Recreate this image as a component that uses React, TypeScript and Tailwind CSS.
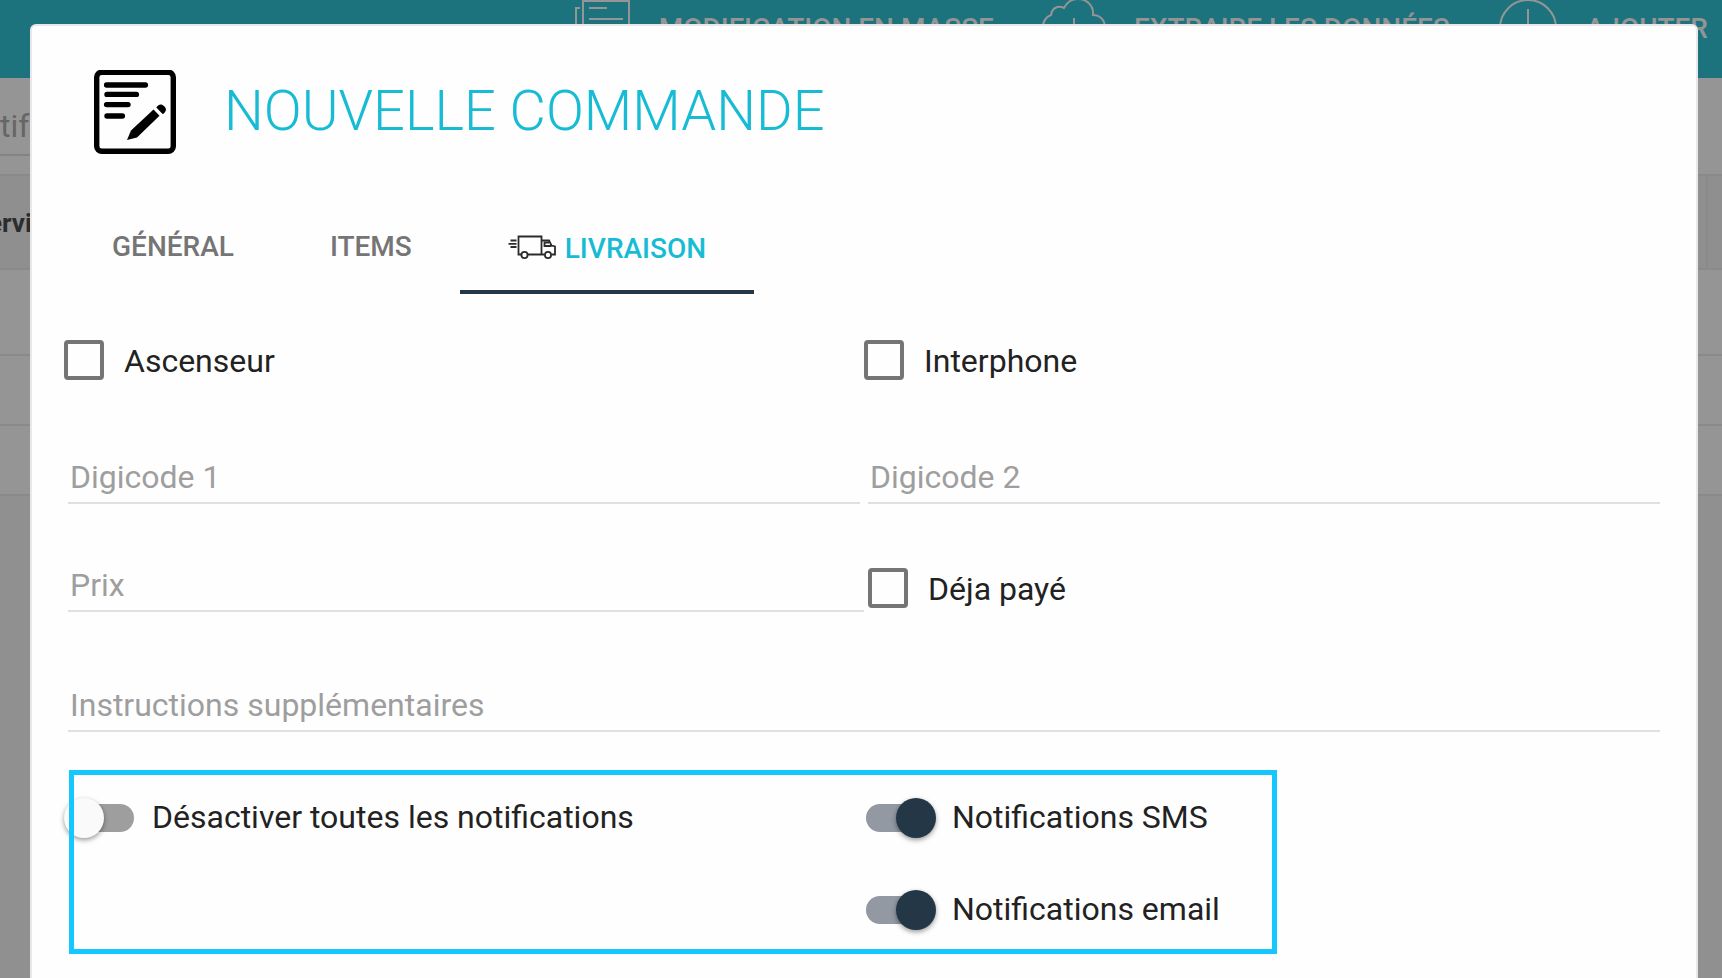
import { useState, type ReactNode } from "react";

function CopyIcon() {
  return (
    <svg className="h-16 w-14 shrink-0" viewBox="0 0 56 64" fill="none" stroke="currentColor" strokeWidth="2">
      <path d="M8 1H54V54H8Z" />
      <path d="M5 8H1V62H46V57" />
      <path d="M14 8H32M14 19H48M14 30H48M14 41H48" />
    </svg>
  );
}

function CloudIcon() {
  return (
    <svg className="h-16 w-16 shrink-0" viewBox="0 0 64 64" fill="none" stroke="currentColor" strokeWidth="2">
      <path d="M14 44C5 42 1 35 1 27C1 21 4 17 9 15C10 8 16 5 22 8C25 2 30-1 36-1C45-1 52 6 51 15C58 15 63 20 63 28C63 36 58 43 50 44" />
      <path d="M32 18V56M24 48L32 56L40 48" />
    </svg>
  );
}

function AddIcon() {
  return (
    <svg className="h-16 w-[60px] shrink-0" viewBox="0 0 60 64" fill="none" stroke="currentColor" strokeWidth="2">
      <circle cx="30" cy="28" r="28" />
      <path d="M30 9V47M11 28H49" />
    </svg>
  );
}

function OrderIcon() {
  return (
    <svg className="h-[84px] w-[82px] shrink-0" viewBox="0 1 82 84">
      <rect x="2.7" y="3.2" width="76.6" height="79.1" rx="5" fill="none" stroke="#000" strokeWidth="5.4" />
      <path d="M12.6 16H51.4M13 25.4H42.4M12.6 35.6H34M13 47H28.4" stroke="#000" strokeWidth="5.4" strokeLinecap="round" />
      <path d="M33 71L37 61.5L59.5 40.5L65.5 46.8L43 68.4Z" />
      <path d="M62.3 38.6C64.5 35 67.5 34.4 70 37C72.6 39.6 72.6 41.5 70 44.4L68.6 45Z" />
    </svg>
  );
}

function TruckIcon() {
  return (
    <svg className="mb-1 h-6 w-12 shrink-0" viewBox="0 0 48 24" fill="none" stroke="#2b2b2b" strokeWidth="1.8">
      <path d="M13 19.5H10.5V1.5H33.5V19.5H20M33.5 19.5H36M44 19.5H47V11.5L43.5 10.5L41 5.5H33.5" />
      <path d="M43.5 11H36.5V7.5H41" />
      <circle cx="16.5" cy="20" r="3.1" />
      <circle cx="40" cy="20" r="3.1" />
      <path d="M2.5 5.5H8.5M0.5 8.8H8.5M2.5 12H8.5" />
    </svg>
  );
}

function HeaderAction({ icon, label }: { icon: ReactNode; label: string }) {
  return (
    <button type="button" className="flex items-start gap-7 text-[28px] leading-[34px] font-medium whitespace-nowrap">
      {icon}
      <span className="pt-3">{label}</span>
    </button>
  );
}

function Backdrop() {
  return (
    <div className="absolute inset-0 bg-[#909090]" aria-hidden="true" inert>
      <header className="flex h-[78px] justify-end gap-12 overflow-hidden bg-[#1c737e] pr-3.5 text-[#959595]">
        <HeaderAction icon={<CopyIcon />} label="MODIFICATION EN MASSE" />
        <HeaderAction icon={<CloudIcon />} label="EXTRAIRE LES DONNÉES" />
        <HeaderAction icon={<AddIcon />} label="AJOUTER" />
      </header>
      <div className="h-24 bg-[#959595]">
        <div className="flex h-[78px] w-[300px] items-center border-b-2 border-[#848484] pt-5 text-[32px] text-[#666]">tif</div>
      </div>
      <div className="flex h-24 items-center justify-between border-y-2 border-[#8a8a8a] bg-[#8f8f8f] text-[26px] font-bold text-[#2c2c2c]">
        <span className="-ml-3 pt-0.5">ervice</span>
        <span className="w-4 self-stretch border-l-2 border-[#8a8a8a]" />
      </div>
      <div className="h-[86px] border-b-2 border-[#8a8a8a] bg-[#959595]" />
      <div className="h-[70px] border-b-2 border-[#8a8a8a] bg-[#959595]" />
      <div className="h-[70px] border-b-2 border-[#8a8a8a] bg-[#959595]" />
    </div>
  );
}

function Tab({ active, onClick, children }: { active: boolean; onClick: () => void; children: ReactNode }) {
  return (
    <button
      type="button"
      role="tab"
      aria-selected={active}
      onClick={onClick}
      className={
        active
          ? "flex items-center gap-[9px] border-b-4 border-[#243746] px-12 pt-1 text-[#17bcd4]"
          : "flex items-center gap-[9px] border-b-4 border-transparent px-12 text-[#757575]"
      }
    >
      {children}
    </button>
  );
}

function Checkbox({ label }: { label: string }) {
  return (
    <label className="flex items-center gap-5">
      <input type="checkbox" className="size-10 appearance-none rounded-sm border-4 border-[#757575] checked:bg-[#243746]" />
      <span className="-mb-0.5">{label}</span>
    </label>
  );
}

function TextField({ label }: { label: string }) {
  return (
    <input
      type="text"
      aria-label={label}
      placeholder={label}
      className="block h-[60px] w-full border-b-2 border-[#e0e0e0] bg-transparent px-0.5 pt-2 outline-none placeholder:text-[#9e9e9e] placeholder:opacity-100"
    />
  );
}

function Toggle({ label, defaultChecked = false }: { label: string; defaultChecked?: boolean }) {
  return (
    <label className="flex h-10 items-center gap-4">
      <span className="grid h-10 w-[72px] items-center">
        <input
          type="checkbox"
          role="switch"
          defaultChecked={defaultChecked}
          className="peer col-start-1 row-start-1 mx-0.5 h-7 appearance-none rounded-full bg-[#9e9e9e] checked:bg-[#9299a2]"
        />
        <span className="col-start-1 row-start-1 size-10 rounded-full bg-[#fafafa] shadow-[0_2px_5px_rgba(0,0,0,0.4)] peer-checked:justify-self-end peer-checked:bg-[#243746]" />
      </span>
      <span className="pb-0.5">{label}</span>
    </label>
  );
}

export default function App() {
  const [tab, setTab] = useState("livraison");
  return (
    <div className="relative h-screen overflow-hidden font-[Roboto,sans-serif]">
      <Backdrop />
      <div className="relative h-full pt-6 pr-6 pl-[30px]">
        <main
          role="dialog"
          aria-labelledby="title"
          className="min-h-full rounded-t-md border-2 border-b-0 border-[#e8e8e8] bg-[#fefefe] px-8 text-[32px] leading-10 text-[#222]"
        >
          <div className="flex items-start gap-12 px-[30px] pt-11">
            <OrderIcon />
            <h1 id="title" className="text-[56px] leading-[82px] font-light text-[#17bcd4]">NOUVELLE COMMANDE</h1>
          </div>
          <div role="tablist" className="mt-[49px] flex h-[91px] text-[28px] font-medium">
            <Tab active={tab === "general"} onClick={() => setTab("general")}>GÉNÉRAL</Tab>
            <Tab active={tab === "items"} onClick={() => setTab("items")}>ITEMS</Tab>
            <Tab active={tab === "livraison"} onClick={() => setTab("livraison")}>
              <TruckIcon />
              LIVRAISON
            </Tab>
          </div>
          <form>
            <div className="mt-[46px] grid grid-cols-2">
              <Checkbox label="Ascenseur" />
              <Checkbox label="Interphone" />
            </div>
            <div className="mt-16 grid grid-cols-2 gap-2 px-1">
              <TextField label="Digicode 1" />
              <TextField label="Digicode 2" />
            </div>
            <div className="mt-12 grid grid-cols-2 gap-1 pl-1">
              <TextField label="Prix" />
              <div className="pt-4">
                <Checkbox label="Déja payé" />
              </div>
            </div>
            <div className="mt-[60px] px-1">
              <TextField label="Instructions supplémentaires" />
            </div>
            <div className="relative mt-[38px] grid grid-cols-2 gap-y-[52px] pt-7 pb-6">
              <Toggle label="Désactiver toutes les notifications" />
              <Toggle label="Notifications SMS" defaultChecked />
              <div className="col-start-2">
                <Toggle label="Notifications email" defaultChecked />
              </div>
              <div className="pointer-events-none absolute inset-y-0 left-[5px] w-[75.5%] border-5 border-[#14c8ff]" />
            </div>
          </form>
        </main>
      </div>
    </div>
  );
}
